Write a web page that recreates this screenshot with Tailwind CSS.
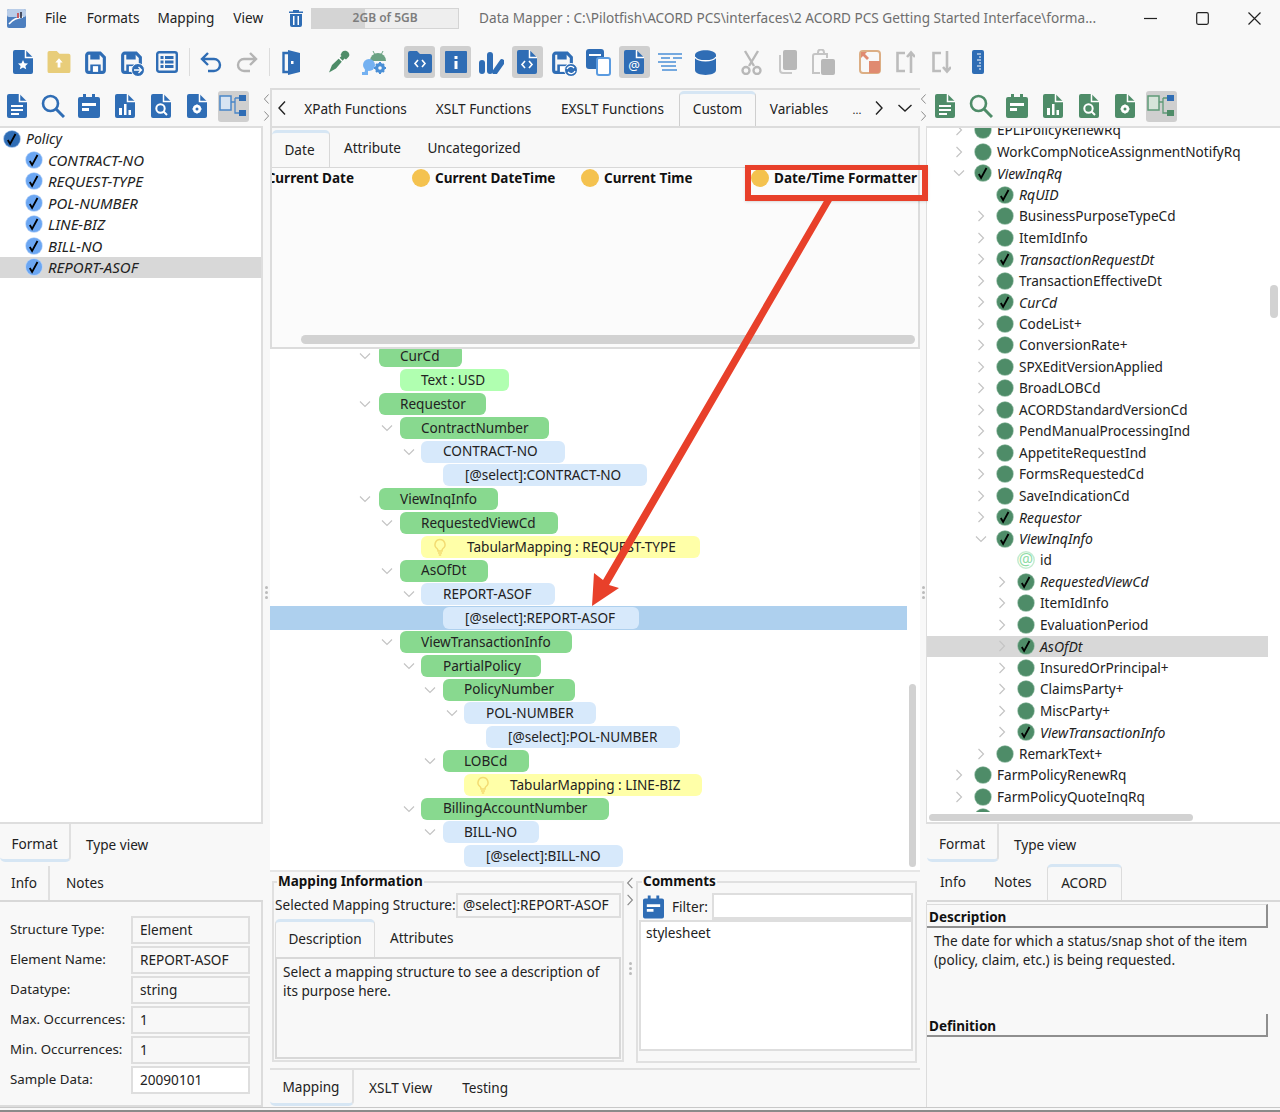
<!doctype html>
<html><head><meta charset="utf-8"><script src="https://cdn.jsdelivr.net/npm/@tailwindcss/browser@4"></script></head>
<body class="m-0">
<svg class="hidden" xmlns="http://www.w3.org/2000/svg">
<symbol id="doc" viewBox="0 0 20 24"><path fill="currentColor" d="M2 0h10.500L20 7.500V22a2 2 0 0 1-2 2H2a2 2 0 0 1-2-2V2a2 2 0 0 1 2-2z"/><path fill="none" stroke="#fff" stroke-width="1.500" d="M12.500 0v7.500H20"/></symbol>
<symbol id="save" viewBox="0 0 24 24"><path fill="none" stroke="currentColor" stroke-width="3" d="M3.500 5a2 2 0 0 1 2-2h11l4 4v12.500a2 2 0 0 1-2 2h-13a2 2 0 0 1-2-2z"/><path fill="currentColor" d="M7 3h9v6H7zM7 14h10v7H7z"/><path fill="#fff" d="M9.500 15.500h5V21h-5z"/></symbol>
<symbol id="note" viewBox="0 0 22 24"><path fill="currentColor" d="M2 3h18a2 2 0 0 1 2 2v17a2 2 0 0 1-2 2H2a2 2 0 0 1-2-2V5a2 2 0 0 1 2-2zM5 0h3v4H5zM14 0h3v4h-3z"/><path fill="#fff" d="M4 9h14v3H4zM4 14h7v3H4z"/></symbol>
<symbol id="chev-l" viewBox="0 0 10 16"><path fill="none" stroke="currentColor" stroke-width="1.400" d="M8 1.500 2 8l6 6.500"/></symbol>
<symbol id="chev-r" viewBox="0 0 10 16"><path fill="none" stroke="currentColor" stroke-width="1.400" d="m2 1.500 6 6.500-6 6.500"/></symbol>
<symbol id="chev-d" viewBox="0 0 16 10"><path fill="none" stroke="currentColor" stroke-width="1.400" d="M1.500 2 8 8l6.500-6"/></symbol>
<symbol id="tr" viewBox="0 0 12 12"><path fill="none" stroke="#c4c4c4" stroke-width="1.200" d="m3.500 1 5 5-5 5"/></symbol>
<symbol id="td" viewBox="0 0 12 12"><path fill="none" stroke="#c4c4c4" stroke-width="1.200" d="m1 3.500 5 5 5-5"/></symbol>
<symbol id="dg" viewBox="0 0 18 18"><circle cx="9" cy="9" r="8.700" fill="#8fb9a1"/><circle cx="9" cy="9" r="8" fill="#4e8c68"/></symbol>
<symbol id="dgc" viewBox="0 0 18 18"><circle cx="9" cy="9" r="8.700" fill="#8fb9a1"/><circle cx="9" cy="9" r="8" fill="#4e8c68"/><path fill="none" stroke="#000" stroke-width="1.800" d="m4.800 10 2.300 4L12.500 4"/></symbol>
<symbol id="db0" viewBox="0 0 18 18"><circle cx="9" cy="9" r="8.700" fill="#8eb4e4"/><circle cx="9" cy="9" r="8" fill="#2f6db5"/><path fill="none" stroke="#000" stroke-width="1.800" d="m4.800 10 2.300 4L12.500 4"/></symbol>
<symbol id="db1" viewBox="0 0 18 18"><circle cx="9" cy="9" r="8.700" fill="#b5d2f8"/><circle cx="9" cy="9" r="8" fill="#6ba6f2"/><path fill="none" stroke="#000" stroke-width="1.800" d="m4.800 10 2.300 4L12.500 4"/></symbol>
<symbol id="bulb" viewBox="0 0 14 18"><path fill="none" stroke="#f3dc72" stroke-width="1.500" d="M7 1.500a5 5 0 0 0-3 9c.8.700 1 1.500 1 2.500h4c0-1 .2-1.800 1-2.500a5 5 0 0 0-3-9z"/><path stroke="#f3dc72" stroke-width="1.500" d="M5 15h4M5.800 17h2.400"/></symbol>
<symbol id="lines" viewBox="0 0 20 24"><use href="#doc"/><path fill="#fff" d="M4 11h12v2H4zM4 15h12v2H4zM4 19h8v2H4z"/></symbol>
<symbol id="docchart" viewBox="0 0 20 24"><use href="#doc"/><path fill="#fff" d="M4 14h3v7H4zM9 10h2.500v11H9zM13.500 16H16v5h-2.500z"/></symbol>
<symbol id="docsearch" viewBox="0 0 20 24"><use href="#doc"/><circle cx="9.500" cy="14.500" r="4.200" fill="none" stroke="#fff" stroke-width="2"/><path stroke="#fff" stroke-width="2" d="m12.500 17.500 3.500 3.500"/></symbol>
<symbol id="docgear" viewBox="0 0 20 24"><use href="#doc"/><circle cx="10" cy="15" r="3" fill="none" stroke="#fff" stroke-width="2.400"/><path stroke="#fff" stroke-width="1.500" d="M10 10.500v9M5.500 15h9M7 12l6 6M13 12l-6 6"/><circle cx="10" cy="15" r="1.500" fill="currentColor"/></symbol>
<symbol id="search" viewBox="0 0 24 24"><circle cx="9.500" cy="9.500" r="7.500" fill="none" stroke="currentColor" stroke-width="2.600"/><path stroke="currentColor" stroke-width="3" d="m15 15 8 8"/></symbol>
</svg>
<div class="relative flex h-[1112px] w-[1280px] flex-col overflow-hidden bg-[#f8f8f8] font-['Noto_Sans',sans-serif] text-[13.600px] text-[#222]">

<!-- title bar -->
<div class="flex h-[36px] shrink-0 items-center">
  <svg class="ml-[7px] h-[19px] w-[19px]" viewBox="0 0 19 19"><rect width="19" height="19" rx="2" fill="#4d7fbf"/><rect width="19" height="8" rx="2" fill="#b9cde8"/><path d="M2 15c4-5 8-6 14-7" stroke="#fff" stroke-width="1.500" fill="none"/><path d="M11 4v5" stroke="#c33" stroke-width="1.500"/><path d="M14 3v6" stroke="#223" stroke-width="1.500"/></svg>
  <span class="ml-[19px]">File</span><span class="ml-[20px]">Formats</span><span class="ml-[18px]">Mapping</span><span class="ml-[19px]">View</span>
  <svg class="ml-[26px] h-[17px] w-[14px] text-[#2f6db5]" viewBox="0 0 14 17"><path fill="currentColor" d="M4 0h6v1.500h4V3H0V1.500h4zM1 4h12v11a2 2 0 0 1-2 2H3a2 2 0 0 1-2-2z"/><path fill="#fff" d="M4 6h1.500v9H4zM8.500 6H10v9H8.500z"/></svg>
  <div class="relative ml-[8px] flex h-[21px] w-[148px] items-center justify-center border border-[#d4d4d4] bg-[#eeeeee]"><div class="absolute inset-y-0 left-0 w-[53px] bg-[#d4d4d4]"></div><span class="relative text-[12px] font-semibold text-[#7d7d7d]">2GB of 5GB</span></div>
  <span class="ml-[20px] w-[620px] truncate whitespace-nowrap text-[#6e6e6e]">Data Mapper : C:\Pilotfish\ACORD PCS\interfaces\2 ACORD PCS Getting Started Interface\forma...</span>
  <svg class="ml-[45px] h-[14px] w-[13px]" viewBox="0 0 13 14"><path d="M0 7.500h13" stroke="#222" stroke-width="1.200"/></svg>
  <svg class="ml-[39px] h-[13px] w-[13px]" viewBox="0 0 13 13"><rect x=".7" y=".7" width="11.600" height="11.600" rx="1.500" fill="none" stroke="#222" stroke-width="1.200"/></svg>
  <svg class="ml-[39px] h-[13px] w-[13px]" viewBox="0 0 13 13"><path d="m.5.500 12 12M12.500.500l-12 12" stroke="#222" stroke-width="1.200"/></svg>
</div>

<!-- main toolbar -->
<div class="flex h-[52px] shrink-0 items-center pl-[5px] text-[#2f6db5]">
  <div class="flex w-[36px] justify-center"><svg class="h-[24px] w-[20px]" viewBox="0 0 20 24"><use href="#doc"/><path fill="#fff" d="m10 10 1.500 3.200 3.500.400-2.600 2.300.800 3.400-3.200-1.800-3.200 1.800.800-3.400L5 13.600l3.500-.400z"/></svg></div>
  <div class="flex w-[36px] justify-center"><svg class="h-[22px] w-[24px]" viewBox="0 0 25 24"><path fill="#e8cd7a" d="M2 0h8l3 3h10a2 2 0 0 1 2 2v17a2 2 0 0 1-2 2H2a2 2 0 0 1-2-2V2a2 2 0 0 1 2-2z"/><path fill="#fff" d="m12.500 8 4 4.500H14V18h-3v-5.500H8.500z"/></svg></div>
  <div class="flex w-[36px] justify-center"><svg class="h-[25px] w-[25px]"><use href="#save"/></svg></div>
  <div class="relative flex w-[36px] justify-center"><svg class="h-[25px] w-[25px]"><use href="#save"/></svg><svg class="absolute bottom-[-2px] right-[4px] h-[14px] w-[14px]" viewBox="0 0 14 14"><circle cx="7" cy="7" r="6.500" fill="#2f6db5" stroke="#fff"/><path d="M3 7h7M7.500 4l3 3-3 3" stroke="#fff" fill="none" stroke-width="1.300"/></svg></div>
  <div class="flex w-[36px] justify-center"><svg class="h-[22px] w-[22px]" viewBox="0 0 22 22"><rect x="1.200" y="1.200" width="19.600" height="19.600" rx="2" fill="none" stroke="currentColor" stroke-width="2.400"/><path fill="currentColor" d="M4.500 5h3v3h-3zM9 5h8.500v3H9zM4.500 9.500h3v3h-3zM9 9.500h8.500v3H9zM4.500 14h3v3h-3zM9 14h8.500v3H9z"/></svg></div>
  <div class="mx-[3.500px] h-[28px] w-px bg-[#dcdcdc]"></div>
  <div class="flex w-[36px] justify-center"><svg class="h-[24px] w-[24px]" viewBox="0 0 24 24" fill="none" stroke="currentColor" stroke-width="2.400"><path d="M9 3 3 9l6 6M3 9h12a6 6 0 0 1 0 12H9"/></svg></div>
  <div class="flex w-[36px] justify-center"><svg class="h-[24px] w-[24px]" viewBox="0 0 24 24" fill="none" stroke="#b4b4b4" stroke-width="2.400"><path d="m15 3 6 6-6 6M21 9H9a6 6 0 0 0 0 12h6"/></svg></div>
  <div class="mx-[3.500px] h-[28px] w-px bg-[#dcdcdc]"></div>
  <div class="flex w-[36px] justify-center"><svg class="h-[25px] w-[18px]" viewBox="0 0 18 25"><path fill="none" stroke="currentColor" stroke-width="2.400" d="M6 3H1.500v19H6"/><path fill="currentColor" d="m6 0 12 3v19L6 25z"/><rect x="9" y="11" width="2.500" height="3" fill="#fff"/></svg></div>
  <div class="ml-[11px] flex w-[36px] justify-center"><svg class="h-[24px] w-[23px]" viewBox="0 0 23 24"><path fill="#4e8c68" d="M15 2c2-2 5-1.500 6.500.500 1.500 2 1 4-1 5.500l-1.500 1.500-1.500-1-8.500 10-7 4 3-7.500 9.500-9-1-1z"/><path stroke="#fff" stroke-width="1.200" d="m11 7 6 6"/></svg></div>
  <div class="flex w-[36px] justify-center"><svg class="h-[25px] w-[26px]" viewBox="0 0 26 25"><path fill="#6ba283" d="M9 11a8 8 0 0 1 16 0z"/><path d="m12 1 2 4M22 1l-2 4" stroke="#6ba283"/><circle cx="8" cy="15" r="6" fill="#74b1f1"/><path fill="#74b1f1" d="M4 20h3v5l-4 0zM1 22h3v3H1z"/><circle cx="19" cy="18" r="3.500" fill="none" stroke="#4a8fd6" stroke-width="3"/><path stroke="#4a8fd6" stroke-width="2" d="M19 12v12M13 18h12M15 14l8 8M23 14l-8 8"/><circle cx="19" cy="18" r="1.800" fill="#f8f8f8"/></svg></div>
  <div class="ml-[10px] flex w-[35.750px] justify-center"><div class="flex h-[32px] w-[31px] items-center justify-center rounded-[3px] bg-[#cfcfcf]"><svg class="h-[22px] w-[24px]" viewBox="0 0 24 22"><path fill="currentColor" d="M2 0h7l3 3h10a2 2 0 0 1 2 2v15a2 2 0 0 1-2 2H2a2 2 0 0 1-2-2V2a2 2 0 0 1 2-2z"/><path fill="none" stroke="#fff" stroke-width="1.600" d="m10 9-3 3.500 3 3.500M14 9l3 3.500-3 3.500"/></svg></div></div>
  <div class="flex w-[35.750px] justify-center"><div class="flex h-[32px] w-[31px] items-center justify-center rounded-[3px] bg-[#cfcfcf]"><svg class="h-[22px] w-[22px]" viewBox="0 0 22 22"><rect width="22" height="22" rx="1" fill="currentColor"/><path fill="#fff" d="M9.500 5h3v3h-3zM9.500 10h3v8h-3z"/></svg></div></div>
  <div class="flex w-[35.750px] justify-center"><svg class="h-[24px] w-[25px]" viewBox="0 0 25 24"><rect x="0" y="10" width="6" height="14" rx="3" fill="currentColor"/><rect x="8" y="2" width="6" height="22" rx="3" fill="currentColor"/><path d="m16 22 7-10" stroke="currentColor" stroke-width="5.500" stroke-linecap="round"/></svg></div>
  <div class="flex w-[35.750px] justify-center"><div class="flex h-[32px] w-[31px] items-center justify-center rounded-[3px] bg-[#cfcfcf]"><svg class="h-[24px] w-[20px]" viewBox="0 0 20 24"><use href="#doc"/><path fill="none" stroke="#fff" stroke-width="1.600" d="m8 11-3 3.500L8 18M12 11l3 3.500-3 3.500"/></svg></div></div>
  <div class="relative flex w-[35.750px] justify-center"><svg class="h-[25px] w-[25px]"><use href="#save"/></svg><svg class="absolute bottom-[-2px] right-[3px] h-[14px] w-[14px]" viewBox="0 0 14 14"><circle cx="7" cy="7" r="6.500" fill="#2f6db5" stroke="#fff"/><path d="M3 6a4 4 0 0 1 7-1M11 8a4 4 0 0 1-7 1" stroke="#fff" fill="none" stroke-width="1.300"/></svg></div>
  <div class="flex w-[35.750px] justify-center"><svg class="h-[27px] w-[25px]" viewBox="0 0 25 27"><rect x="0" y="0" width="18" height="20" rx="3" fill="currentColor"/><path fill="#fff" d="M3 5h12v2H3z"/><rect x="11" y="9" width="13" height="17" rx="2" fill="#fff" stroke="#5b9be0" stroke-width="2"/></svg></div>
  <div class="flex w-[35.750px] justify-center"><div class="flex h-[32px] w-[31px] items-center justify-center rounded-[3px] bg-[#cfcfcf]"><svg class="h-[24px] w-[20px]" viewBox="0 0 20 24"><use href="#doc"/><text x="10" y="20" text-anchor="middle" font-size="13" fill="#fff" font-family="Noto Sans">@</text></svg></div></div>
  <div class="flex w-[35.750px] justify-center"><svg class="h-[18px] w-[24px]" viewBox="0 0 24 18"><path stroke="#4a8fd6" stroke-width="1.600" d="M0 1h24M3 5h9M15 5h9M0 9h18M3 13h15M4 17h15"/></svg></div>
  <div class="flex w-[35.750px] justify-center"><svg class="h-[25px] w-[21px]" viewBox="0 0 21 25"><path fill="currentColor" d="M0 5c0-6.500 21-6.500 21 0v15c0 6.500-21 6.500-21 0z"/><path fill="none" stroke="#fff" stroke-width="1.300" d="M0 7c2 5 19 5 21 0"/></svg></div>
  <div class="ml-[10px] flex w-[36px] justify-center"><svg class="h-[25px] w-[21px]" viewBox="0 0 21 25" fill="none" stroke="#b8b8b8" stroke-width="2.400"><path d="M4 1l9 15M17 1 8 16"/><circle cx="5" cy="20.500" r="3.500"/><circle cx="16" cy="20.500" r="3.500"/></svg></div>
  <div class="flex w-[36px] justify-center"><svg class="h-[24px] w-[19px]" viewBox="0 0 19 24"><path fill="none" stroke="#c8c8c8" stroke-width="2" d="M2 5v15a3 3 0 0 0 3 3h9"/><rect x="5" y="0" width="14" height="20" rx="2" fill="#b8b8b8"/></svg></div>
  <div class="flex w-[36px] justify-center"><svg class="h-[26px] w-[23px]" viewBox="0 0 23 26"><path fill="none" stroke="#c4c4c4" stroke-width="2" d="M8 5H3a2 2 0 0 0-2 2v17h7M6 5V3.500a3 3 0 0 1 6 0V5h3v4M6 5h9"/><rect x="9" y="10" width="14" height="16" rx="2" fill="#b8b8b8"/></svg></div>
  <div class="ml-[10px] flex w-[36px] justify-center"><svg class="h-[24px] w-[22px]" viewBox="0 0 22 24"><rect x="1" y="1" width="20" height="22" rx="3" fill="#f8f8f8" stroke="#dcae84" stroke-width="2"/><path fill="#e08a70" d="M10 11h11v10a2 2 0 0 1-2 2h-9z"/><path fill="#e08a70" d="M2 2h6l-2 2 4 4-2 2-4-4-2 2z"/></svg></div>
  <div class="flex w-[36px] justify-center"><svg class="h-[24px] w-[19px]" viewBox="0 0 19 24" fill="none" stroke="#bcbcbc" stroke-width="2.600"><path d="M9 3H1.500v18H9M15 23V3M11 7l4-4.500L19 7"/></svg></div>
  <div class="flex w-[36px] justify-center"><svg class="h-[24px] w-[19px]" viewBox="0 0 19 24" fill="none" stroke="#bcbcbc" stroke-width="2.600"><path d="M9 3H1.500v18H9M15 1v20M11 17l4 4.500 4-4.500"/></svg></div>
  <div class="flex w-[36px] justify-center"><svg class="h-[24px] w-[12px]" viewBox="0 0 12 24"><rect width="12" height="24" rx="2" fill="currentColor"/><path stroke="#fff" d="M5 4h4M7 7h2M5 10h4M7 13h2M5 16h4M7 19h2"/></svg></div>
</div>

<!-- main -->
<div class="flex h-[1019px] shrink-0">

<!-- left -->
<div class="flex w-[263px] shrink-0 flex-col">
  <div class="flex h-[38px] shrink-0 items-center pb-[2px] text-[#2f6db5]">
    <div class="-ml-px flex w-[36px] justify-center"><svg class="h-[24px] w-[20px]"><use href="#lines"/></svg></div>
    <div class="flex w-[36px] justify-center"><svg class="h-[24px] w-[24px]"><use href="#search"/></svg></div>
    <div class="flex w-[36px] justify-center"><svg class="h-[24px] w-[22px]"><use href="#note"/></svg></div>
    <div class="flex w-[36px] justify-center"><svg class="h-[24px] w-[20px]"><use href="#docchart"/></svg></div>
    <div class="flex w-[36px] justify-center"><svg class="h-[24px] w-[20px]"><use href="#docsearch"/></svg></div>
    <div class="flex w-[36px] justify-center"><svg class="h-[24px] w-[20px]"><use href="#docgear"/></svg></div>
    <div class="flex w-[36px] justify-center"><div class="flex h-[31px] w-[31px] items-center justify-center rounded-[3px] bg-[#cfcfcf]"><svg class="h-[24px] w-[28px]" viewBox="0 0 28 24"><rect x="1" y="2" width="11" height="14" fill="#d8e4f2" stroke="#4a86c8" stroke-width="1.500"/><path d="M12 8h4M16 4v15h4M16 4h4" stroke="#4a86c8" fill="none" stroke-width="1.300"/><rect x="20" y="1" width="7" height="6" fill="#2f6db5"/><rect x="20" y="16" width="7" height="6" fill="#2f6db5"/></svg></div></div>
  </div>
  <div class="h-[698px] shrink-0 border-t-2 border-r-2 border-b-2 border-[#dedede] bg-white text-[15px] italic text-[#222]">
    <div class="flex h-[21px] items-center pl-[3px] text-[14px]"><svg class="mr-[5px] h-[18px] w-[18px]"><use href="#db0"/></svg><span>Policy</span></div>
    <div class="flex h-[21.500px] items-center pl-[25px]"><svg class="mr-[5px] h-[18px] w-[18px]"><use href="#db1"/></svg><span>CONTRACT-NO</span></div>
    <div class="flex h-[21.500px] items-center pl-[25px]"><svg class="mr-[5px] h-[18px] w-[18px]"><use href="#db1"/></svg><span>REQUEST-TYPE</span></div>
    <div class="flex h-[21.500px] items-center pl-[25px]"><svg class="mr-[5px] h-[18px] w-[18px]"><use href="#db1"/></svg><span>POL-NUMBER</span></div>
    <div class="flex h-[21.500px] items-center pl-[25px]"><svg class="mr-[5px] h-[18px] w-[18px]"><use href="#db1"/></svg><span>LINE-BIZ</span></div>
    <div class="flex h-[21.500px] items-center pl-[25px]"><svg class="mr-[5px] h-[18px] w-[18px]"><use href="#db1"/></svg><span>BILL-NO</span></div>
    <div class="flex h-[21.500px] items-center bg-[#d8d8d8] pl-[25px]"><svg class="mr-[5px] h-[18px] w-[18px]"><use href="#db1"/></svg><span>REPORT-ASOF</span></div>
  </div>
  <div class="flex h-[38px] shrink-0 items-center">
    <div class="flex h-full w-[71px] items-center justify-center rounded-b-[5px] border-r-2 border-b-[3px] border-r-[#e0e0e0] border-b-[#d6e6f4] pt-[6px]">Format</div><span class="ml-[15px] pt-[4px]">Type view</span>
  </div>
  <div class="mt-[2px] flex h-[38px] shrink-0 items-center border-b-2 border-[#d8d8d8] pt-[2px]">
    <div class="flex h-full w-[50px] items-center justify-center border-r-2 border-[#e0e0e0]">Info</div><span class="ml-[16px]">Notes</span>
  </div>
  <div class="flex flex-1 flex-col gap-[2px] border-r-2 border-b-2 border-[#dcdcdc] pt-[14px] pb-[2px] pl-[10px]">
    <div class="flex h-[28px] items-center"><span class="w-[121px] text-[13.300px]">Structure Type:</span><span class="flex h-[28px] w-[119px] items-center border-2 border-[#dedede] pl-[7px]">Element</span></div>
    <div class="flex h-[28px] items-center"><span class="w-[121px] text-[13.300px]">Element Name:</span><span class="flex h-[28px] w-[119px] items-center border-2 border-[#dedede] pl-[7px]">REPORT-ASOF</span></div>
    <div class="flex h-[28px] items-center"><span class="w-[121px] text-[13.300px]">Datatype:</span><span class="flex h-[28px] w-[119px] items-center border-2 border-[#dedede] pl-[7px]">string</span></div>
    <div class="flex h-[28px] items-center"><span class="w-[121px] text-[13.300px]">Max. Occurrences:</span><span class="flex h-[28px] w-[119px] items-center border-2 border-[#dedede] pl-[7px]">1</span></div>
    <div class="flex h-[28px] items-center"><span class="w-[121px] text-[13.300px]">Min. Occurrences:</span><span class="flex h-[28px] w-[119px] items-center border-2 border-[#dedede] pl-[7px]">1</span></div>
    <div class="flex h-[28px] items-center"><span class="w-[121px] text-[13.300px]">Sample Data:</span><span class="flex h-[28px] w-[119px] items-center border-2 border-[#dedede] bg-white pl-[7px]">20090101</span></div>
  </div>
</div>

<!-- splitter -->
<div class="flex w-[7px] shrink-0 flex-col items-center pt-[2px] text-[#888]">
  <svg class="mt-[2px] h-[14px] w-[7px]"><use href="#chev-l"/></svg><svg class="mt-[3px] h-[14px] w-[7px]"><use href="#chev-r"/></svg>
  <div class="mt-[463px] flex flex-col gap-[2px]"><i class="block h-[3px] w-[3px] rounded-full bg-[#bbb]"></i><i class="block h-[3px] w-[3px] rounded-full bg-[#bbb]"></i><i class="block h-[3px] w-[3px] rounded-full bg-[#bbb]"></i></div>
</div>

<!-- center -->
<div class="flex w-[650px] shrink-0 flex-col">
  <div class="flex h-[38px] shrink-0 items-end border-t-2 border-l-2 border-r-0 border-[#dcdcdc]">
    <div class="flex h-full w-[18px] items-center justify-center pl-[2px] text-[#222]"><svg class="h-[16px] w-[10px]"><use href="#chev-l"/></svg></div>
    <div class="flex h-full w-[131px] items-center justify-center pt-[2px]">XPath Functions</div>
    <div class="flex h-full w-[125px] items-center justify-center pt-[2px]">XSLT Functions</div>
    <div class="flex h-full w-[133px] items-center justify-center pt-[2px]">EXSLT Functions</div>
    <div class="mt-[2px] flex h-[35px] w-[77px] items-center justify-center rounded-t-[5px] border-x border-t-[3px] border-x-[#cfcfcf] border-t-[#d6e6f4] pb-[1px]">Custom</div>
    <div class="flex h-full w-[86px] items-center justify-center pt-[2px]">Variables</div>
    <div class="flex h-full w-[30px] items-center justify-center pt-[4px] text-[11px]">...</div>
    <svg class="mb-[10px] ml-[2px] h-[16px] w-[10px]"><use href="#chev-r"/></svg>
    <svg class="mb-[13px] ml-[13px] h-[10px] w-[16px]"><use href="#chev-d"/></svg>
  </div>
  <div class="flex h-[223px] shrink-0 flex-col border-t-2 border-r-2 border-b-2 border-l-2 border-[#dcdcdc] bg-[#fbfbfb]">
    <div class="flex h-[40px] shrink-0 items-end border-b border-[#d8d8d8] bg-[#f8f8f8]">
      <div class="flex h-[37px] w-[58px] items-center justify-center rounded-t-[5px] border-r border-[#d8d8d8] border-t-[3px] border-t-[#d6e6f4] pr-[2px]">Date</div>
      <div class="flex h-[36px] w-[85px] items-center justify-center pb-[2px]">Attribute</div>
      <div class="flex h-[36px] w-[118px] items-center justify-center pb-[2px]">Uncategorized</div>
    </div>
    <div class="flex h-[20px] items-center overflow-hidden text-[13.500px] font-bold text-[#111]">
      <div class="flex w-[82px] shrink-0 justify-end overflow-hidden whitespace-nowrap">Current Date</div>
      <svg class="ml-[58px] h-[18px] w-[18px] shrink-0" viewBox="0 0 18 18"><circle cx="9" cy="9" r="9" fill="#f4c24f"/></svg><span class="ml-[5px] w-[146px] shrink-0 whitespace-nowrap">Current DateTime</span>
      <svg class="h-[18px] w-[18px] shrink-0" viewBox="0 0 18 18"><circle cx="9" cy="9" r="9" fill="#f4c24f"/></svg><span class="ml-[5px] w-[147px] shrink-0 whitespace-nowrap">Current Time</span>
      <svg class="h-[18px] w-[18px] shrink-0" viewBox="0 0 18 18"><circle cx="9" cy="9" r="9" fill="#f4c24f"/></svg><span class="ml-[5px] shrink-0 whitespace-nowrap">Date/Time Formatter</span>
    </div>
    <div class="mt-auto mb-[3px] ml-[29px] h-[9px] w-[614px] rounded-full bg-[#d2d2d2]"></div>
  </div>
  <!-- mapping tree -->
  <div class="relative h-[521px] shrink-0 overflow-hidden bg-white text-[13.600px] text-[#222]">
    <div class="absolute top-[335px] right-[4px] h-[183px] w-[7px] rounded-full bg-[#d2d2d2]"></div>
    <div class="-mt-[4.500px] flex h-[23.800px] items-center"><svg class="ml-[89px] mr-[8px] h-[12px] w-[12px]"><use href="#td"/></svg><div class="flex h-[22px] w-[83px] items-center rounded-[6px] bg-[#88d98f] pl-[21px]">CurCd</div></div>
    <div class="flex h-[23.800px] items-center pl-[130px]"><div class="flex h-[22px] w-[109px] items-center rounded-[6px] bg-[#b0ffb0] pl-[21px]">Text : USD</div></div>
    <div class="flex h-[23.800px] items-center"><svg class="ml-[89px] mr-[8px] h-[12px] w-[12px]"><use href="#td"/></svg><div class="flex h-[22px] w-[107px] items-center rounded-[6px] bg-[#88d98f] pl-[21px]">Requestor</div></div>
    <div class="flex h-[23.800px] items-center"><svg class="ml-[111px] mr-[7px] h-[12px] w-[12px]"><use href="#td"/></svg><div class="flex h-[22px] w-[149px] items-center rounded-[6px] bg-[#88d98f] pl-[21px]">ContractNumber</div></div>
    <div class="flex h-[23.800px] items-center"><svg class="ml-[133px] mr-[6px] h-[12px] w-[12px]"><use href="#td"/></svg><div class="flex h-[22px] w-[144px] items-center rounded-[6px] bg-[#d7e9fb] pl-[22px]">CONTRACT-NO</div></div>
    <div class="flex h-[23.800px] items-center pl-[173px]"><div class="flex h-[22px] w-[204px] items-center rounded-[6px] bg-[#d7e9fb] pl-[22px]">[@select]:CONTRACT-NO</div></div>
    <div class="flex h-[23.800px] items-center"><svg class="ml-[89px] mr-[8px] h-[12px] w-[12px]"><use href="#td"/></svg><div class="flex h-[22px] w-[119px] items-center rounded-[6px] bg-[#88d98f] pl-[21px]">ViewInqInfo</div></div>
    <div class="flex h-[23.800px] items-center"><svg class="ml-[111px] mr-[7px] h-[12px] w-[12px]"><use href="#td"/></svg><div class="flex h-[22px] w-[158px] items-center rounded-[6px] bg-[#88d98f] pl-[21px]">RequestedViewCd</div></div>
    <div class="flex h-[23.800px] items-center pl-[151px]"><div class="flex h-[22px] w-[279px] items-center rounded-[6px] bg-[#ffffa8] pl-[12px]"><svg class="mr-[20px] h-[18px] w-[14px]"><use href="#bulb"/></svg>TabularMapping : REQUEST-TYPE</div></div>
    <div class="flex h-[23.800px] items-center"><svg class="ml-[111px] mr-[7px] h-[12px] w-[12px]"><use href="#td"/></svg><div class="flex h-[22px] w-[88px] items-center rounded-[6px] bg-[#88d98f] pl-[21px]">AsOfDt</div></div>
    <div class="flex h-[23.800px] items-center"><svg class="ml-[133px] mr-[6px] h-[12px] w-[12px]"><use href="#td"/></svg><div class="flex h-[22px] w-[134px] items-center rounded-[6px] bg-[#d7e9fb] pl-[22px]">REPORT-ASOF</div></div>
    <div class="flex h-[23.800px] w-[637px] items-center bg-[#aed0ee] pl-[173px]"><div class="flex h-[22px] w-[196px] items-center rounded-[6px] bg-[#d7e9fb] pl-[22px]">[@select]:REPORT-ASOF</div></div>
    <div class="flex h-[23.800px] items-center"><svg class="ml-[111px] mr-[7px] h-[12px] w-[12px]"><use href="#td"/></svg><div class="flex h-[22px] w-[172px] items-center rounded-[6px] bg-[#88d98f] pl-[21px]">ViewTransactionInfo</div></div>
    <div class="flex h-[23.800px] items-center"><svg class="ml-[133px] mr-[6px] h-[12px] w-[12px]"><use href="#td"/></svg><div class="flex h-[22px] w-[120px] items-center rounded-[6px] bg-[#88d98f] pl-[22px]">PartialPolicy</div></div>
    <div class="flex h-[23.800px] items-center"><svg class="ml-[154px] mr-[7px] h-[12px] w-[12px]"><use href="#td"/></svg><div class="flex h-[22px] w-[132px] items-center rounded-[6px] bg-[#88d98f] pl-[21px]">PolicyNumber</div></div>
    <div class="flex h-[23.800px] items-center"><svg class="ml-[176px] mr-[6px] h-[12px] w-[12px]"><use href="#td"/></svg><div class="flex h-[22px] w-[132px] items-center rounded-[6px] bg-[#d7e9fb] pl-[22px]">POL-NUMBER</div></div>
    <div class="flex h-[23.800px] items-center pl-[216px]"><div class="flex h-[22px] w-[194px] items-center rounded-[6px] bg-[#d7e9fb] pl-[22px]">[@select]:POL-NUMBER</div></div>
    <div class="flex h-[23.800px] items-center"><svg class="ml-[154px] mr-[7px] h-[12px] w-[12px]"><use href="#td"/></svg><div class="flex h-[22px] w-[86px] items-center rounded-[6px] bg-[#88d98f] pl-[21px]">LOBCd</div></div>
    <div class="flex h-[23.800px] items-center pl-[194px]"><div class="flex h-[22px] w-[238px] items-center rounded-[6px] bg-[#ffffa8] pl-[12px]"><svg class="mr-[20px] h-[18px] w-[14px]"><use href="#bulb"/></svg>TabularMapping : LINE-BIZ</div></div>
    <div class="flex h-[23.800px] items-center"><svg class="ml-[133px] mr-[6px] h-[12px] w-[12px]"><use href="#td"/></svg><div class="flex h-[22px] w-[188px] items-center rounded-[6px] bg-[#88d98f] pl-[22px]">BillingAccountNumber</div></div>
    <div class="flex h-[23.800px] items-center"><svg class="ml-[154px] mr-[7px] h-[12px] w-[12px]"><use href="#td"/></svg><div class="flex h-[22px] w-[96px] items-center rounded-[6px] bg-[#d7e9fb] pl-[21px]">BILL-NO</div></div>
    <div class="flex h-[23.800px] items-center pl-[194px]"><div class="flex h-[22px] w-[159px] items-center rounded-[6px] bg-[#d7e9fb] pl-[22px]">[@select]:BILL-NO</div></div>
  </div>
  <!-- info -->
  <div class="flex h-[198px] shrink-0 border-t-2 border-[#e6e6e6] pl-[2px]">
    <div class="relative mt-[9px] h-[181px] w-[352px] shrink-0 border-2 border-[#e0e0e0] px-[1px]">
      <div class="absolute -top-[11px] left-[3px] bg-[#f8f8f8] px-[1px] text-[13.500px] leading-[18px] font-bold text-[#111]">Mapping Information</div>
      <div class="mt-[10px] flex h-[25px] items-center"><span class="w-[181px] whitespace-nowrap">Selected Mapping Structure:</span><span class="flex h-[25px] w-[165px] items-center border-2 border-[#dedede] pl-[5px] whitespace-nowrap">@select]:REPORT-ASOF</span></div>
      <div class="mt-[1px] flex h-[38px] items-center">
        <div class="flex h-full w-[100px] items-center justify-center rounded-t-[5px] border-x border-x-[#dcdcdc] border-t-[3px] border-t-[#d6e6f4]">Description</div><span class="ml-[15px]">Attributes</span>
      </div>
      <div class="h-[102px] w-[346px] border-2 border-[#d8d8d8] px-[6px] pt-[3px] leading-[19px]">Select a mapping structure to see a description of its purpose here.</div>
    </div>
    <div class="flex w-[12px] shrink-0 flex-col items-center pt-[4px] text-[#888]">
      <svg class="h-[14px] w-[8px]"><use href="#chev-l"/></svg><svg class="mt-[3px] h-[14px] w-[8px]"><use href="#chev-r"/></svg>
      <div class="mt-[55px] flex flex-col gap-[2px]"><i class="block h-[3px] w-[3px] rounded-full bg-[#bbb]"></i><i class="block h-[3px] w-[3px] rounded-full bg-[#bbb]"></i><i class="block h-[3px] w-[3px] rounded-full bg-[#bbb]"></i></div>
    </div>
    <div class="relative mt-[9px] h-[182px] w-[281px] shrink-0 border-2 border-[#e0e0e0] px-[1px]">
      <div class="absolute -top-[11px] left-[4px] bg-[#f8f8f8] px-[1px] text-[13.500px] leading-[18px] font-bold text-[#111]">Comments</div>
      <div class="mt-[10px] flex h-[27px] items-center text-[#2f6db5]"><svg class="ml-[4px] h-[24px] w-[21px]"><use href="#note"/></svg><span class="ml-[8px] w-[40px] pt-[1px] text-[#222]">Filter:</span><span class="h-[27px] w-[201px] border-2 border-b-[3px] border-[#dedede] bg-white"></span></div>
      <div class="h-[131px] w-[274px] border-2 border-[#dedede] bg-white px-[5px] pt-[1px] leading-[20px]">stylesheet</div>
    </div>
  </div>
  <!-- bottom tabs -->
  <div class="flex h-[39px] shrink-0 items-start border-t-2 border-[#e0e0e0]">
    <div class="flex h-[36px] w-[84px] items-center justify-center rounded-b-[5px] border-r-2 border-b-[3px] border-r-[#e0e0e0] border-b-[#d6e6f4] pt-[1px]">Mapping</div>
    <div class="flex h-[36px] items-center pl-[15px]">XSLT View</div>
    <div class="flex h-[36px] items-center pl-[30px]">Testing</div>
  </div>
</div>

<!-- splitter -->
<div class="flex w-[7px] shrink-0 flex-col items-center pt-[2px] text-[#888]">
  <svg class="mt-[2px] h-[14px] w-[7px]"><use href="#chev-l"/></svg><svg class="mt-[3px] h-[14px] w-[7px]"><use href="#chev-r"/></svg>
  <div class="mt-[463px] flex flex-col gap-[2px]"><i class="block h-[3px] w-[3px] rounded-full bg-[#bbb]"></i><i class="block h-[3px] w-[3px] rounded-full bg-[#bbb]"></i><i class="block h-[3px] w-[3px] rounded-full bg-[#bbb]"></i></div>
</div>

<!-- right -->
<div class="flex w-[353px] shrink-0 flex-col">
  <div class="flex h-[38px] shrink-0 items-center pb-[2px] text-[#4e8c68]">
    <div class="flex w-[36px] justify-center"><svg class="h-[24px] w-[20px]"><use href="#lines"/></svg></div>
    <div class="flex w-[36px] justify-center"><svg class="h-[24px] w-[24px]"><use href="#search"/></svg></div>
    <div class="flex w-[36px] justify-center"><svg class="h-[24px] w-[22px]"><use href="#note"/></svg></div>
    <div class="flex w-[36px] justify-center"><svg class="h-[24px] w-[20px]"><use href="#docchart"/></svg></div>
    <div class="flex w-[36px] justify-center"><svg class="h-[24px] w-[20px]"><use href="#docsearch"/></svg></div>
    <div class="flex w-[36px] justify-center"><svg class="h-[24px] w-[20px]"><use href="#docgear"/></svg></div>
    <div class="flex w-[36px] justify-center"><div class="flex h-[31px] w-[31px] items-center justify-center rounded-[3px] bg-[#cfcfcf]"><svg class="h-[24px] w-[28px]" viewBox="0 0 28 24"><rect x="1" y="2" width="11" height="14" fill="#d6e4da" stroke="#5f9a78" stroke-width="1.500"/><path d="M12 8h4M16 4v15h4M16 4h4" stroke="#5f9a78" fill="none" stroke-width="1.300"/><rect x="20" y="1" width="7" height="6" fill="#2f6db5"/><rect x="20" y="16" width="7" height="6" fill="#4e8c68"/></svg></div></div>
  </div>
  <div class="relative -ml-px h-[698px] shrink-0 overflow-hidden border-t-2 border-b-2 border-l border-[#dedede] bg-white text-[13.600px] text-[#222]">
    <div class="absolute top-[157px] right-[2px] h-[33px] w-[8px] rounded-full bg-[#d2d2d2]"></div>
    <div class="absolute bottom-[1px] left-[2px] h-[7px] w-[264px] rounded-full bg-[#d2d2d2]"></div>
    <div class="-mt-[8.500px] flex h-[21.500px] items-center pl-[26px]"><svg class="mr-[9px] h-[12px] w-[12px]"><use href="#tr"/></svg><svg class="mr-[5px] h-[18px] w-[18px]"><use href="#dg"/></svg>EPLIPolicyRenewRq</div>
    <div class="flex h-[21.500px] items-center pl-[26px]"><svg class="mr-[9px] h-[12px] w-[12px]"><use href="#tr"/></svg><svg class="mr-[5px] h-[18px] w-[18px]"><use href="#dg"/></svg>WorkCompNoticeAssignmentNotifyRq</div>
    <div class="flex h-[21.500px] items-center pl-[26px] text-[14px] italic"><svg class="mr-[9px] h-[12px] w-[12px]"><use href="#td"/></svg><svg class="mr-[5px] h-[18px] w-[18px]"><use href="#dgc"/></svg>ViewInqRq</div>
    <div class="flex h-[21.500px] items-center pl-[69px] text-[14px] italic"><svg class="mr-[5px] h-[18px] w-[18px]"><use href="#dgc"/></svg>RqUID</div>
    <div class="flex h-[21.500px] items-center pl-[48px]"><svg class="mr-[9px] h-[12px] w-[12px]"><use href="#tr"/></svg><svg class="mr-[5px] h-[18px] w-[18px]"><use href="#dg"/></svg>BusinessPurposeTypeCd</div>
    <div class="flex h-[21.500px] items-center pl-[48px]"><svg class="mr-[9px] h-[12px] w-[12px]"><use href="#tr"/></svg><svg class="mr-[5px] h-[18px] w-[18px]"><use href="#dg"/></svg>ItemIdInfo</div>
    <div class="flex h-[21.500px] items-center pl-[48px] text-[14px] italic"><svg class="mr-[9px] h-[12px] w-[12px]"><use href="#tr"/></svg><svg class="mr-[5px] h-[18px] w-[18px]"><use href="#dgc"/></svg>TransactionRequestDt</div>
    <div class="flex h-[21.500px] items-center pl-[48px]"><svg class="mr-[9px] h-[12px] w-[12px]"><use href="#tr"/></svg><svg class="mr-[5px] h-[18px] w-[18px]"><use href="#dg"/></svg>TransactionEffectiveDt</div>
    <div class="flex h-[21.500px] items-center pl-[48px] text-[14px] italic"><svg class="mr-[9px] h-[12px] w-[12px]"><use href="#tr"/></svg><svg class="mr-[5px] h-[18px] w-[18px]"><use href="#dgc"/></svg>CurCd</div>
    <div class="flex h-[21.500px] items-center pl-[48px]"><svg class="mr-[9px] h-[12px] w-[12px]"><use href="#tr"/></svg><svg class="mr-[5px] h-[18px] w-[18px]"><use href="#dg"/></svg>CodeList+</div>
    <div class="flex h-[21.500px] items-center pl-[48px]"><svg class="mr-[9px] h-[12px] w-[12px]"><use href="#tr"/></svg><svg class="mr-[5px] h-[18px] w-[18px]"><use href="#dg"/></svg>ConversionRate+</div>
    <div class="flex h-[21.500px] items-center pl-[48px]"><svg class="mr-[9px] h-[12px] w-[12px]"><use href="#tr"/></svg><svg class="mr-[5px] h-[18px] w-[18px]"><use href="#dg"/></svg>SPXEditVersionApplied</div>
    <div class="flex h-[21.500px] items-center pl-[48px]"><svg class="mr-[9px] h-[12px] w-[12px]"><use href="#tr"/></svg><svg class="mr-[5px] h-[18px] w-[18px]"><use href="#dg"/></svg>BroadLOBCd</div>
    <div class="flex h-[21.500px] items-center pl-[48px]"><svg class="mr-[9px] h-[12px] w-[12px]"><use href="#tr"/></svg><svg class="mr-[5px] h-[18px] w-[18px]"><use href="#dg"/></svg>ACORDStandardVersionCd</div>
    <div class="flex h-[21.500px] items-center pl-[48px]"><svg class="mr-[9px] h-[12px] w-[12px]"><use href="#tr"/></svg><svg class="mr-[5px] h-[18px] w-[18px]"><use href="#dg"/></svg>PendManualProcessingInd</div>
    <div class="flex h-[21.500px] items-center pl-[48px]"><svg class="mr-[9px] h-[12px] w-[12px]"><use href="#tr"/></svg><svg class="mr-[5px] h-[18px] w-[18px]"><use href="#dg"/></svg>AppetiteRequestInd</div>
    <div class="flex h-[21.500px] items-center pl-[48px]"><svg class="mr-[9px] h-[12px] w-[12px]"><use href="#tr"/></svg><svg class="mr-[5px] h-[18px] w-[18px]"><use href="#dg"/></svg>FormsRequestedCd</div>
    <div class="flex h-[21.500px] items-center pl-[48px]"><svg class="mr-[9px] h-[12px] w-[12px]"><use href="#tr"/></svg><svg class="mr-[5px] h-[18px] w-[18px]"><use href="#dg"/></svg>SaveIndicationCd</div>
    <div class="flex h-[21.500px] items-center pl-[48px] text-[14px] italic"><svg class="mr-[9px] h-[12px] w-[12px]"><use href="#tr"/></svg><svg class="mr-[5px] h-[18px] w-[18px]"><use href="#dgc"/></svg>Requestor</div>
    <div class="flex h-[21.500px] items-center pl-[48px] text-[14px] italic"><svg class="mr-[9px] h-[12px] w-[12px]"><use href="#td"/></svg><svg class="mr-[5px] h-[18px] w-[18px]"><use href="#dgc"/></svg>ViewInqInfo</div>
    <div class="flex h-[21.500px] items-center pl-[90px]"><svg class="mr-[5px] h-[18px] w-[18px]" viewBox="0 0 18 18"><circle cx="9" cy="9" r="8.200" fill="#fff" stroke="#c5ecd0" stroke-width="1.500"/><text x="9" y="14" text-anchor="middle" font-size="16" fill="#8fdca6" font-family="Noto Sans">@</text></svg>id</div>
    <div class="flex h-[21.500px] items-center pl-[69px] text-[14px] italic"><svg class="mr-[9px] h-[12px] w-[12px]"><use href="#tr"/></svg><svg class="mr-[5px] h-[18px] w-[18px]"><use href="#dgc"/></svg>RequestedViewCd</div>
    <div class="flex h-[21.500px] items-center pl-[69px]"><svg class="mr-[9px] h-[12px] w-[12px]"><use href="#tr"/></svg><svg class="mr-[5px] h-[18px] w-[18px]"><use href="#dg"/></svg>ItemIdInfo</div>
    <div class="flex h-[21.500px] items-center pl-[69px]"><svg class="mr-[9px] h-[12px] w-[12px]"><use href="#tr"/></svg><svg class="mr-[5px] h-[18px] w-[18px]"><use href="#dg"/></svg>EvaluationPeriod</div>
    <div class="flex h-[21.500px] w-[341px] items-center bg-[#d8d8d8] pl-[69px] text-[14px] italic"><svg class="mr-[9px] h-[12px] w-[12px]"><use href="#tr"/></svg><svg class="mr-[5px] h-[18px] w-[18px]"><use href="#dgc"/></svg>AsOfDt</div>
    <div class="flex h-[21.500px] items-center pl-[69px]"><svg class="mr-[9px] h-[12px] w-[12px]"><use href="#tr"/></svg><svg class="mr-[5px] h-[18px] w-[18px]"><use href="#dg"/></svg>InsuredOrPrincipal+</div>
    <div class="flex h-[21.500px] items-center pl-[69px]"><svg class="mr-[9px] h-[12px] w-[12px]"><use href="#tr"/></svg><svg class="mr-[5px] h-[18px] w-[18px]"><use href="#dg"/></svg>ClaimsParty+</div>
    <div class="flex h-[21.500px] items-center pl-[69px]"><svg class="mr-[9px] h-[12px] w-[12px]"><use href="#tr"/></svg><svg class="mr-[5px] h-[18px] w-[18px]"><use href="#dg"/></svg>MiscParty+</div>
    <div class="flex h-[21.500px] items-center pl-[69px] text-[14px] italic"><svg class="mr-[9px] h-[12px] w-[12px]"><use href="#tr"/></svg><svg class="mr-[5px] h-[18px] w-[18px]"><use href="#dgc"/></svg>ViewTransactionInfo</div>
    <div class="flex h-[21.500px] items-center pl-[48px]"><svg class="mr-[9px] h-[12px] w-[12px]"><use href="#tr"/></svg><svg class="mr-[5px] h-[18px] w-[18px]"><use href="#dg"/></svg>RemarkText+</div>
    <div class="flex h-[21.500px] items-center pl-[26px]"><svg class="mr-[9px] h-[12px] w-[12px]"><use href="#tr"/></svg><svg class="mr-[5px] h-[18px] w-[18px]"><use href="#dg"/></svg>FarmPolicyRenewRq</div>
    <div class="flex h-[21.500px] items-center pl-[26px]"><svg class="mr-[9px] h-[12px] w-[12px]"><use href="#tr"/></svg><svg class="mr-[5px] h-[18px] w-[18px]"><use href="#dg"/></svg>FarmPolicyQuoteInqRq</div>
    <div class="h-[4px] w-full overflow-hidden pl-[47px]"><svg class="h-[18px] w-[18px]"><use href="#dg"/></svg></div>
  </div>
  <div class="flex h-[38px] shrink-0 items-center">
    <div class="flex h-full w-[72px] items-center justify-center rounded-b-[5px] border-r-2 border-b-[3px] border-r-[#e0e0e0] border-b-[#d6e6f4] pt-[6px]">Format</div><span class="ml-[15px] pt-[4px]">Type view</span>
  </div>
  <div class="mt-[2px] flex h-[38px] shrink-0 items-center border-b-2 border-[#d8d8d8] pl-[13px]">
    <span>Info</span><span class="ml-[28px]">Notes</span>
    <div class="ml-[15px] flex h-full w-[75px] items-center justify-center rounded-t-[5px] border-x border-x-[#dcdcdc] border-t-[3px] border-t-[#d6e6f4]">ACORD</div>
  </div>
  <div class="-ml-px flex flex-1 flex-col border-l border-[#dcdcdc]">
    <div class="mt-[2px] flex h-[24px] w-[341px] shrink-0 items-center border-t border-r-2 border-b-2 border-t-[#dcdcdc] border-r-[#8f8f8f] border-b-[#8f8f8f] pt-[3px] pl-[2px] text-[13.500px] font-bold text-[#111]">Description</div>
    <div class="h-[86px] shrink-0 px-[6px] pl-[7px] pt-[3px] leading-[19px]">The date for which a status/snap shot of the item (policy, claim, etc.) is being requested.</div>
    <div class="flex h-[23px] w-[341px] shrink-0 items-center border-r-2 border-b-2 border-[#8f8f8f] pt-[3px] pl-[2px] text-[13.500px] font-bold text-[#111]">Definition</div>
  </div>
</div>
</div>

<!-- footer line -->
<div class="h-[5px] shrink-0 border-t border-b-2 border-t-[#c8c8c8] border-b-[#8a8a8a]"></div>

<!-- annotation overlay -->
<div class="absolute top-[165px] left-[745px] h-[36px] w-[183px] border-x-[6px] border-t-[5px] border-b-[6px] border-[#e8402a] shadow-sm"></div>
<svg class="absolute inset-0 h-[1112px] w-[1280px]" viewBox="0 0 1280 1112"><path fill="#e8402a" d="M825 199h8L609 585l10 3-27 18 2-33 9 7z"/></svg>
</div>
</body></html>
